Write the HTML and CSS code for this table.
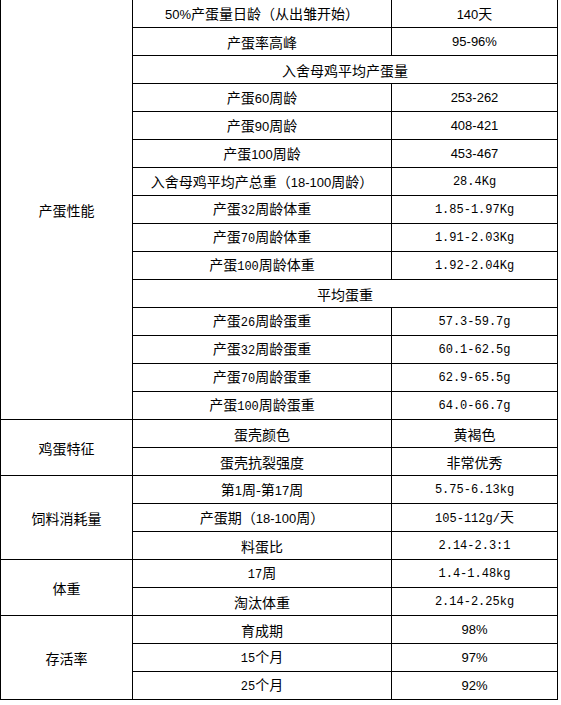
FILE: index.html
```html
<!DOCTYPE html>
<html lang="zh-CN">
<head>
<meta charset="utf-8">
<title>产蛋性能</title>
<link rel="stylesheet" href="styles.css">
</head>
<body>
<table class="spec">
<colgroup><col class="c1"><col class="c2"><col class="c3"></colgroup>
<tbody>
<tr class="first"><td rowspan="15">产蛋性能</td><td><span class="s">50%</span>产蛋量日龄（从出雏开始）</td><td><span class="s">140</span>天</td></tr>
<tr><td>产蛋率高峰</td><td class="s">95-96%</td></tr>
<tr><td colspan="2">入舍母鸡平均产蛋量</td></tr>
<tr><td>产蛋<span class="s">60</span>周龄</td><td class="s">253-262</td></tr>
<tr><td>产蛋<span class="s">90</span>周龄</td><td class="s">408-421</td></tr>
<tr><td>产蛋<span class="s">100</span>周龄</td><td class="s">453-467</td></tr>
<tr><td>入舍母鸡平均产总重（<span class="s">18-100</span>周龄）</td><td class="m">28.4Kg</td></tr>
<tr><td>产蛋<span class="m">32</span>周龄体重</td><td class="m">1.85-1.97Kg</td></tr>
<tr><td>产蛋<span class="m">70</span>周龄体重</td><td class="m">1.91-2.03Kg</td></tr>
<tr><td>产蛋<span class="m">100</span>周龄体重</td><td class="m">1.92-2.04Kg</td></tr>
<tr><td colspan="2">平均蛋重</td></tr>
<tr><td>产蛋<span class="m">26</span>周龄蛋重</td><td class="m">57.3-59.7g</td></tr>
<tr><td>产蛋<span class="m">32</span>周龄蛋重</td><td class="m">60.1-62.5g</td></tr>
<tr><td>产蛋<span class="m">70</span>周龄蛋重</td><td class="m">62.9-65.5g</td></tr>
<tr><td>产蛋<span class="m">100</span>周龄蛋重</td><td class="m">64.0-66.7g</td></tr>
<tr><td rowspan="2">鸡蛋特征</td><td>蛋壳颜色</td><td>黄褐色</td></tr>
<tr><td>蛋壳抗裂强度</td><td>非常优秀</td></tr>
<tr><td rowspan="3">饲料消耗量</td><td>第<span class="s">1</span>周-第<span class="s">17</span>周</td><td class="m">5.75-6.13kg</td></tr>
<tr><td>产蛋期（<span class="s">18-100</span>周）</td><td><span class="m">105-112g/</span>天</td></tr>
<tr><td>料蛋比</td><td class="m">2.14-2.3:1</td></tr>
<tr><td rowspan="2">体重</td><td><span class="m">17</span>周</td><td class="m">1.4-1.48kg</td></tr>
<tr><td>淘汰体重</td><td class="m">2.14-2.25kg</td></tr>
<tr><td rowspan="3">存活率</td><td>育成期</td><td class="s">98%</td></tr>
<tr><td><span class="m">15</span>个月</td><td class="s">97%</td></tr>
<tr><td><span class="m">25</span>个月</td><td class="s">92%</td></tr>
</tbody>
</table>
</body>
</html>
```

FILE: styles.css
```css
html, body {
  margin: 0;
  padding: 0;
  background: #fff;
}
.spec {
  border-collapse: collapse;
  table-layout: fixed;
  width: 557px;
  font-family: "Noto Sans CJK SC", "Liberation Sans", sans-serif;
  font-size: 14px;
  color: #000;
}
.c1 { width: 132px; }
.c2 { width: 259px; }
.c3 { width: 166px; }
.spec td {
  border: 1px solid #000;
  height: 27px;
  padding: 0;
  text-align: center;
  vertical-align: middle;
  line-height: 16px;
  white-space: nowrap;
}
.spec tr.first td {
  border-top: 0;
}
.s {
  font-family: "Liberation Sans", sans-serif;
  font-size: 13px;
}
.m {
  font-family: "Liberation Mono", monospace;
  font-size: 12px;
}
```
